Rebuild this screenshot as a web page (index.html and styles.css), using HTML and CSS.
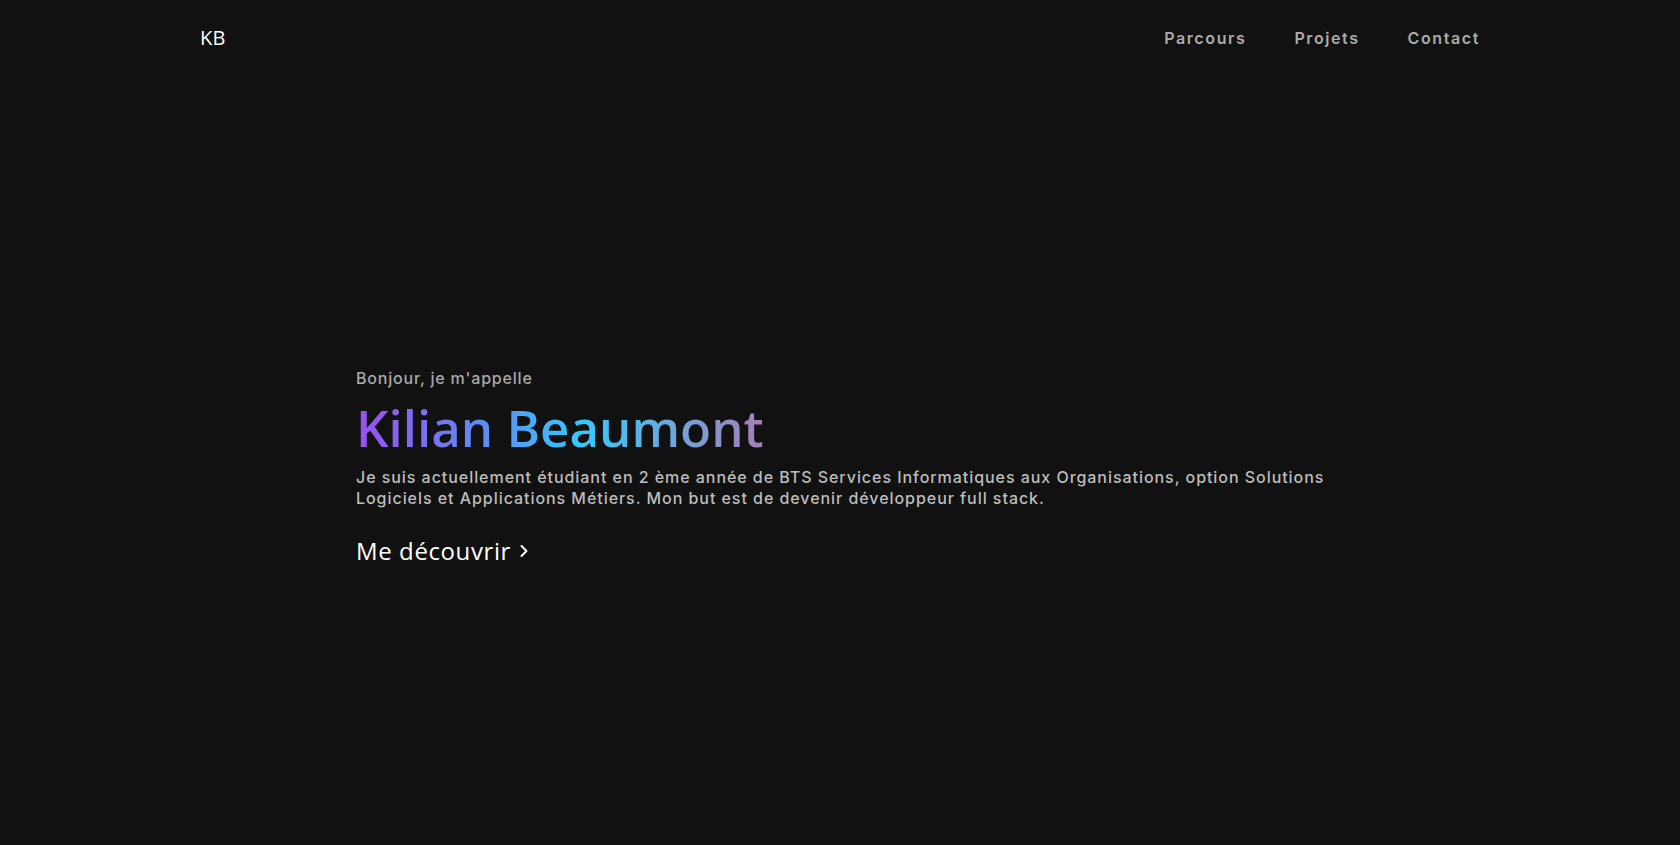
FILE: index.html
```html
<!DOCTYPE html>
<html lang="fr">
<head>
<meta charset="utf-8">
<title>Kilian Beaumont</title>
<link rel="stylesheet" href="styles.css">
</head>
<body>
<div class="page">
  <header class="nav">
    <a class="logo" href="#">KB</a>
    <nav class="links">
      <a href="#parcours">Parcours</a>
      <a href="#projets">Projets</a>
      <a href="#contact">Contact</a>
    </nav>
  </header>
  <main class="hero">
    <div class="hero-inner">
      <p class="hello">Bonjour, je m'appelle</p>
      <h1 class="name">Kilian Beaumont</h1>
      <p class="intro">Je suis actuellement étudiant en 2 ème année de BTS Services Informatiques aux Organisations, option Solutions Logiciels et Applications Métiers. Mon but est de devenir développeur full stack.</p>
      <a class="cta" href="#parcours">Me découvrir
        <svg class="chev" width="10" height="14" viewBox="0 0 10 14"><path d="M2.5 2 L7.5 7 L2.5 12" fill="none" stroke="#fff" stroke-width="2" stroke-linecap="round" stroke-linejoin="round"/></svg>
      </a>
    </div>
  </main>
</div>
</body>
</html>
```

FILE: styles.css
```css
* { box-sizing: border-box; }
html, body { margin: 0; padding: 0; }
body {
  background: #111111;
  color: #fff;
  font-family: Inter, "Liberation Sans", sans-serif;
}
a { text-decoration: none; color: inherit; }
.page {
  min-height: 845px;
  display: flex;
  flex-direction: column;
}
.nav {
  width: 1280px;
  margin: 0 auto;
  height: 76px;
  display: flex;
  align-items: center;
  justify-content: space-between;
}
.logo {
  font-family: "Open Sans", sans-serif;
  font-size: 20px;
  font-weight: 400;
  color: #fff;
  letter-spacing: 0.3px;
  margin-top: -1px;
}
.links {
  display: flex;
  gap: 48px;
}
.links a {
  font-size: 16px;
  font-weight: 600;
  letter-spacing: 1.6px;
  color: #ababab;
}
.hero {
  flex: 1;
  display: flex;
  align-items: center;
  justify-content: center;
  padding-top: 14px;
}
.hero-inner {
  width: 976px;
  padding-left: 4px;
}
.hello {
  margin: 0;
  font-size: 16px;
  font-weight: 500;
  letter-spacing: 0.8px;
  color: #a9a9a9;
}
.name {
  margin: 6px 0 6px;
  font-family: "Open Sans", sans-serif;
  font-size: 51px;
  font-weight: 600;
  line-height: 1.3;
  letter-spacing: 0;
  display: inline-block;
  background: linear-gradient(90deg, #9a4ff0 0%, #5b8ff5 33%, #33c9fe 55%, #5fb0e4 72%, #a67eb6 100%);
  -webkit-background-clip: text;
  background-clip: text;
  color: transparent;
}
.intro {
  margin: 0;
  font-size: 16px;
  font-weight: 500;
  line-height: 21.5px;
  letter-spacing: 0.95px;
  color: #bdbdbd;
}
.cta {
  display: inline-flex;
  align-items: center;
  gap: 8px;
  margin-top: 24px;
  font-family: "Open Sans", sans-serif;
  font-size: 24px;
  font-weight: 400;
  letter-spacing: 0.6px;
  color: #fff;
}
.chev { margin-top: 2px; }
```
